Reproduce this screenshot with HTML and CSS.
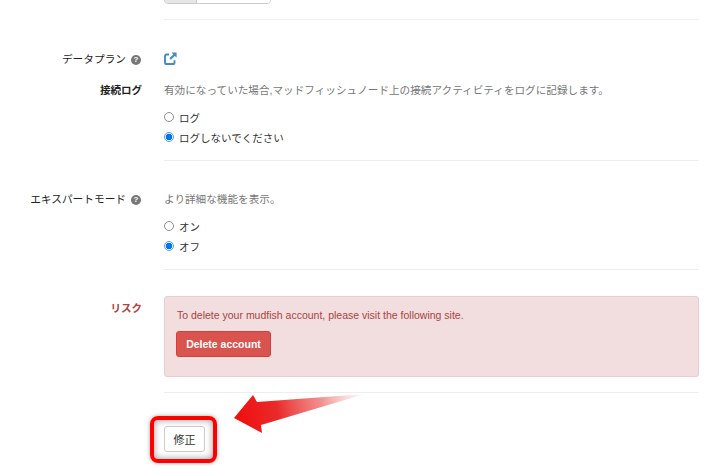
FILE: index.html
```html
<!DOCTYPE html>
<html lang="ja">
  <head>
    <meta charset="UTF-8" />
    <meta name="viewport" content="width=device-width, initial-scale=1.0" />
    <title>設定</title>
    <link rel="stylesheet" href="styles.css">
  </head>

  <body>
    <form class="settings">
      <div class="row row-top">
        <div class="label"></div>
        <div class="field">
          <div class="btn-group">
            <span class="seg seg-active"></span>
            <span class="seg"></span>
          </div>
        </div>
      </div>

      <div class="row row-plan">
        <div class="label">データプラン <span class="help">?</span></div>
        <div class="field">
          <svg class="link-icon" width="13" height="13" viewBox="0 0 13 13">
            <path d="M5 2.5H2.6A1.6 1.6 0 0 0 1 4.1v6.3A1.6 1.6 0 0 0 2.6 12h6.3a1.6 1.6 0 0 0 1.6-1.6V8.2" fill="none" stroke="#428bca" stroke-width="1.9" />
            <path d="M7.6 0.6H12.6V5.6L10.8 3.9 6.9 7.8 5.4 6.3 9.3 2.4Z" fill="#428bca" />
          </svg>
        </div>
      </div>

      <div class="row row-log">
        <div class="label label-strong">接続ログ</div>
        <div class="field field-ruled">
          <p class="hint">有効になっていた場合,マッドフィッシュノード上の接続アクティビティをログに記録します。</p>
          <label class="radio"><input type="radio" name="log" /> ログ</label>
          <label class="radio"><input type="radio" name="log" checked /> ログしないでください</label>
        </div>
      </div>

      <div class="row row-expert">
        <div class="label">エキスパートモード <span class="help">?</span></div>
        <div class="field field-ruled">
          <p class="hint">より詳細な機能を表示。</p>
          <label class="radio"><input type="radio" name="expert" /> オン</label>
          <label class="radio"><input type="radio" name="expert" checked /> オフ</label>
        </div>
      </div>

      <div class="row row-risk">
        <div class="label label-danger">リスク</div>
        <div class="field field-ruled">
          <div class="alert">
            <p>To delete your mudfish account, please visit the following site.</p>
            <button type="button" class="btn-danger">Delete account</button>
          </div>
        </div>
      </div>

      <div class="row row-submit">
        <div class="label"></div>
        <div class="field">
          <button type="button" class="btn-submit">修正</button>
        </div>
      </div>
    </form>

    <!-- annotation drawn over the page -->
    <div class="callout-box"></div>
    <svg class="callout-arrow" width="140" height="50" viewBox="230 390 140 50">
      <defs>
        <linearGradient id="arrow-fade" x1="240" y1="420" x2="365" y2="394" gradientUnits="userSpaceOnUse">
          <stop offset="0" stop-color="#f01010" />
          <stop offset="0.3" stop-color="#ea2a2a" />
          <stop offset="0.65" stop-color="#ee6a6a" stop-opacity="0.75" />
          <stop offset="1" stop-color="#f4a0a0" stop-opacity="0" />
        </linearGradient>
      </defs>
      <polygon points="234,418 253,395 257,402 365,394 261,425 262,433" fill="url(#arrow-fade)" />
    </svg>
  </body>
</html>
```

FILE: styles.css
```css
html,
body {
  height: 100%;
}

body {
  margin: 0;
  background: #fff;
  color: #333;
  font-family: "Liberation Sans", Arial, "Noto Sans CJK JP", sans-serif;
  font-size: 11px;
  overflow: hidden;
  position: relative;
}

.settings {
  display: flex;
  flex-direction: column;
}

.row {
  display: grid;
  grid-template-columns: 142px 535px;
  column-gap: 22px;
}

.label {
  text-align: right;
  font-size: 10.7px;
  line-height: 16px;
  color: #222;
  white-space: nowrap;
}

.label-strong {
  font-size: 10.5px;
  font-weight: 700;
}

.label-danger {
  padding-top: 4px;
  font-size: 10.5px;
  color: #a94442;
  font-weight: 700;
}

.help {
  display: inline-block;
  width: 10px;
  height: 10px;
  margin: 0 1px 0 2px;
  border-radius: 50%;
  background: #777;
  color: #fff;
  font-size: 8px;
  font-weight: 700;
  line-height: 10px;
  text-align: center;
  vertical-align: 1px;
}

.field-ruled {
  border-bottom: 1px solid #eee;
}

.row-top {
  height: 20px;
}

.row-top .field {
  border-bottom: 1px solid #eee;
}

.btn-group {
  display: flex;
  width: 107px;
  height: 30px;
  margin-top: -26px;
  border: 1px solid #ccc;
  border-radius: 4px;
  overflow: hidden;
  box-sizing: border-box;
}

.seg {
  flex: 1;
  background: #fff;
}

.seg-active {
  flex: 0 0 31px;
  background: #e6e6e6;
  border-right: 1px solid #ccc;
}

.row-plan {
  margin-top: 31px;
  height: 18px;
}

.link-icon {
  display: block;
  margin-top: 1px;
}

.row-log {
  margin-top: 13px;
}

.row-log .field {
  padding-bottom: 13px;
}

.hint {
  margin: 0 0 9px;
  font-size: 10.62px;
  line-height: 16px;
  color: #777;
}

.radio {
  display: flex;
  align-items: center;
  height: 20px;
  font-size: 10.5px;
  color: #333;
}

.radio input {
  appearance: none;
  width: 10px;
  height: 10px;
  margin: 0 5px 0 0;
  border: 1px solid #8f8f8f;
  border-radius: 50%;
  box-sizing: border-box;
}

.radio input:checked {
  border-color: #5a9dfa;
  background: radial-gradient(circle, #0075ff 0 3px, #fff 3.6px);
}

.row-expert {
  margin-top: 30px;
}

.row-expert .field {
  padding-bottom: 13px;
}

.row-risk {
  margin-top: 26px;
}

.row-risk .field {
  padding-bottom: 15px;
}

.alert {
  height: 81px;
  padding: 11px 12px;
  box-sizing: border-box;
  border: 1px solid #ebccd1;
  border-radius: 3px;
  background: #f2dede;
  color: #a94442;
}

.alert p {
  margin: 0 0 9px;
  font-size: 10.5px;
  line-height: 14px;
}

.btn-danger {
  display: block;
  width: 95px;
  height: 26px;
  margin-left: -1px;
  padding: 0;
  border: 1px solid #d43f3a;
  border-radius: 3px;
  background: #d9534f;
  color: #fff;
  font-family: inherit;
  font-size: 10.5px;
  font-weight: 700;
}

.row-submit {
  margin-top: 33px;
}

.btn-submit {
  display: block;
  width: 41px;
  height: 26px;
  padding: 0;
  border: 1px solid #ccc;
  border-radius: 3px;
  background: #fff;
  color: #333;
  font-family: inherit;
  font-size: 11px;
}

.callout-box {
  position: absolute;
  left: 150px;
  top: 416px;
  width: 67px;
  height: 47px;
  box-sizing: border-box;
  border: 4px solid #f00;
  border-radius: 8px;
  box-shadow: inset 0 0 7px rgba(0, 0, 0, 0.4), 0 0 4px rgba(0, 0, 0, 0.35);
}

.callout-arrow {
  position: absolute;
  left: 230px;
  top: 390px;
}
```
